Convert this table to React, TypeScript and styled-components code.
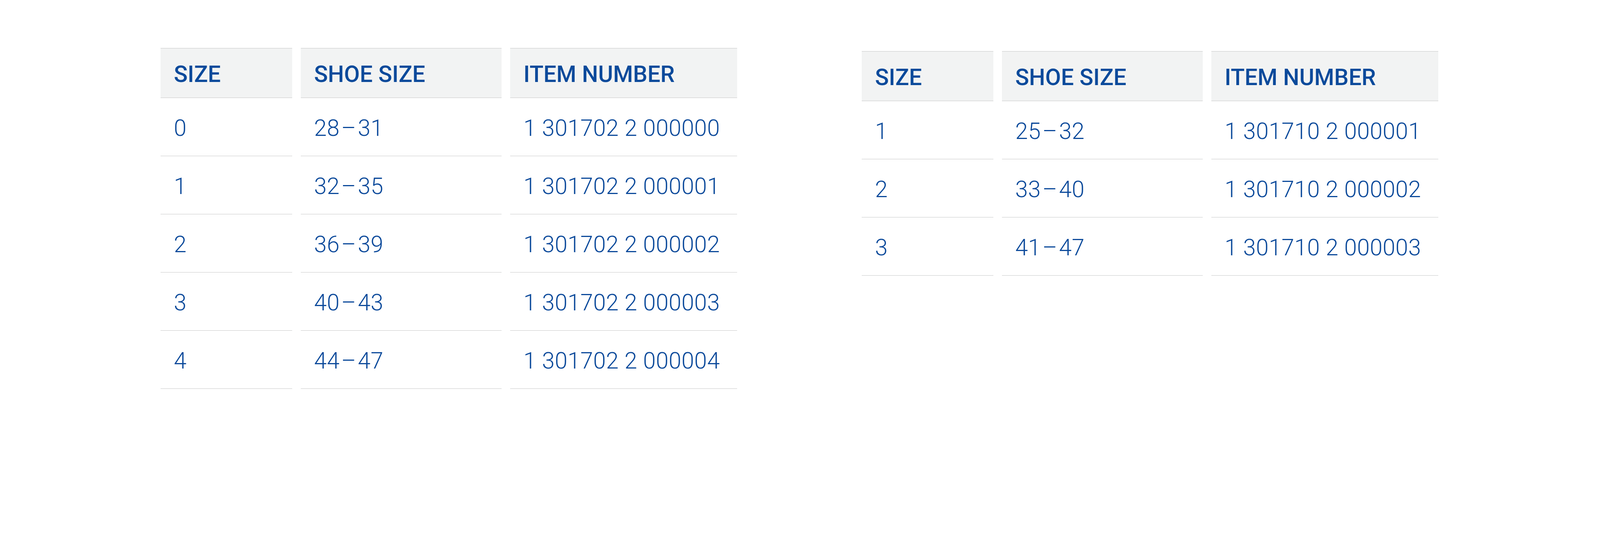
import React from 'react';
import styled, { createGlobalStyle } from 'styled-components';

const GlobalStyle = createGlobalStyle`
  html, body {
    margin: 0;
    padding: 0;
    background: #ffffff;
  }
  body {
    font-family: Roboto, "Liberation Sans", sans-serif;
  }
`;

interface SizeRow {
  size: string;
  shoe: [string, string];
  item: string;
}

const leftRows: SizeRow[] = [
  { size: '0', shoe: ['28', '31'], item: '1 301702 2 000000' },
  { size: '1', shoe: ['32', '35'], item: '1 301702 2 000001' },
  { size: '2', shoe: ['36', '39'], item: '1 301702 2 000002' },
  { size: '3', shoe: ['40', '43'], item: '1 301702 2 000003' },
  { size: '4', shoe: ['44', '47'], item: '1 301702 2 000004' },
];

const rightRows: SizeRow[] = [
  { size: '1', shoe: ['25', '32'], item: '1 301710 2 000001' },
  { size: '2', shoe: ['33', '40'], item: '1 301710 2 000002' },
  { size: '3', shoe: ['41', '47'], item: '1 301710 2 000003' },
];

const SizeTable = ({ rows, offset }: { rows: SizeRow[]; offset: number }) => {
  return (
    <Table offset={offset}>
      <HeadCell>SIZE</HeadCell>
      <HeadCell>SHOE SIZE</HeadCell>
      <HeadCell>ITEM NUMBER</HeadCell>
      {rows.map(row => (
        <React.Fragment key={row.item}>
          <BodyCell>{row.size}</BodyCell>
          <BodyCell>
            {row.shoe[0]}
            <Dash>–</Dash>
            {row.shoe[1]}
          </BodyCell>
          <BodyCell>{row.item}</BodyCell>
        </React.Fragment>
      ))}
    </Table>
  );
};

const App = () => {
  return (
    <>
      <GlobalStyle />
      <Page>
        <SizeTable rows={leftRows} offset={0} />
        <SizeTable rows={rightRows} offset={8} />
      </Page>
    </>
  );
};

export default App;

const Page = styled.main`
  display: flex;
  align-items: flex-start;
  gap: 319px;
  height: 1117px;
  box-sizing: border-box;
  padding: 123px 0 0 411px;
  overflow: hidden;
`;

const Table = styled.section<{ offset: number }>`
  display: grid;
  grid-template-columns: 337px 514px 581px;
  grid-template-rows: 128px;
  grid-auto-rows: 149px;
  column-gap: 22px;
  margin-top: ${({ offset }) => offset}px;
  color: #0c4a9b;
`;

const HeadCell = styled.div`
  display: flex;
  align-items: center;
  box-sizing: border-box;
  padding: 5px 0 0 34px;
  background: #f2f3f3;
  border-top: 1.6px solid #c7c8c8;
  border-bottom: 1.6px solid #c7c8c8;
  font-size: 58.4px;
  font-weight: 500;
  white-space: nowrap;
`;

const BodyCell = styled.div`
  display: flex;
  align-items: center;
  box-sizing: border-box;
  padding: 5px 0 0 34px;
  border-bottom: 1.6px solid #c7c8c8;
  font-size: 58.4px;
  font-weight: 300;
  letter-spacing: 0.4px;
  white-space: nowrap;
`;

const Dash = styled.span`
  margin: 0 4px;
`;
